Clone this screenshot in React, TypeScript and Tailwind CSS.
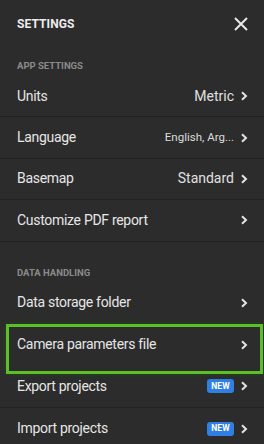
import { ReactNode } from "react";

const Chevron = () => (
  <svg width="8" height="10" viewBox="0 0 8 10" className="shrink-0">
    <path d="M2 1.2 L6 5 L2 8.8" fill="none" stroke="#e4e4e4" strokeWidth="2" />
  </svg>
);

const NewBadge = () => (
  <span className="rounded-[3px] bg-[#2f7fe4] px-[4px] h-[14px] flex items-center text-[8.5px] font-bold text-white tracking-[0.2px]">
    NEW
  </span>
);

const SectionLabel = ({ children, className }: { children: ReactNode; className: string }) => (
  <div className={`flex items-end px-[17px] text-[9.5px] font-bold text-[#8b8b8b] leading-[12px] ${className}`}>
    {children}
  </div>
);

const Row = ({
  label,
  value,
  small,
  badge,
  last,
  tall,
}: {
  label: string;
  value?: string;
  small?: boolean;
  badge?: boolean;
  last?: boolean;
  tall?: boolean;
}) => (
  <div
    className={`${tall ? "h-[42px]" : "h-[41.4px]"} flex items-center justify-between pl-[17px] pr-[16px] ${
      last ? "" : "border-b border-[#222222]"
    }`}
  >
    <span className="text-[14px] tracking-[-0.3px] text-[#e6e6e6]">{label}</span>
    <div className="flex items-center gap-[6px]">
      {value && (
        <span className={small ? "text-[11.5px] text-[#dcdcdc]" : "text-[14px] text-[#e0e0e0]"}>
          {value}
        </span>
      )}
      {badge && <NewBadge />}
      <Chevron />
    </div>
  </div>
);

export default function App() {
  return (
    <div
      className="w-[264px] h-[444px] overflow-hidden bg-[#2c2c2c]"
      style={{ fontFamily: "Roboto, 'Noto Sans', sans-serif" }}
    >
      <div className="h-[48px] flex items-center justify-between pl-[17px] pr-[15px]">
        <span className="text-[12px] font-bold text-[#ececec] tracking-[0.1px]">SETTINGS</span>
        <svg width="16" height="16" viewBox="0 0 16 16">
          <path d="M2 2 L14 14 M14 2 L2 14" stroke="#e8e8e8" strokeWidth="2" />
        </svg>
      </div>

      <SectionLabel className="h-[28px] pb-[4px]">APP SETTINGS</SectionLabel>
      <Row label="Units" value="Metric" />
      <Row label="Language" value="English, Arg..." small />
      <Row label="Basemap" value="Standard" />
      <Row label="Customize PDF report" />

      <SectionLabel className="h-[40px] pb-[3px]">DATA HANDLING</SectionLabel>
      <Row label="Data storage folder" last tall />
      <div className="relative">
        <Row label="Camera parameters file" last tall />
        <div className="absolute left-[6px] right-[1px] top-0 -bottom-[8px] border-[3px] border-[#5bbf25] shadow-[0_0_5px_#1d4a1a]" />
      </div>
      <Row label="Export projects" badge tall />
      <Row label="Import projects" badge last tall />
    </div>
  );
}
